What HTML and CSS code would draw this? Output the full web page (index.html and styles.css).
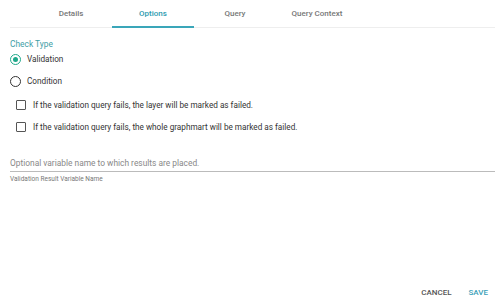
FILE: index.html
```html
<!DOCTYPE html>
<html lang="en">
<head>
    <meta charset="UTF-8" />
    <title>Check Options</title>
    <link rel="stylesheet" href="styles.css">
</head>
<body>
    <div class="dialog">
        <nav class="tabs">
            <div class="tab">Details</div>
            <div class="tab active">Options</div>
            <div class="tab">Query</div>
            <div class="tab">Query Context</div>
        </nav>

        <div class="content">
            <div class="group-label">Check Type</div>
            <div class="radio-row">
                <span class="radio checked"></span>
                <span>Validation</span>
            </div>
            <div class="radio-row">
                <span class="radio"></span>
                <span>Condition</span>
            </div>

            <div class="checks">
                <div class="check-row">
                    <span class="checkbox"></span>
                    <span>If the validation query fails, the layer will be marked as failed.</span>
                </div>
                <div class="check-row">
                    <span class="checkbox"></span>
                    <span>If the validation query fails, the whole graphmart will be marked as failed.</span>
                </div>
            </div>

            <div class="field">
                <div class="field-input">Optional variable name to which results are placed.</div>
                <div class="field-hint">Validation Result Variable Name</div>
            </div>
        </div>

        <footer class="actions">
            <div class="btn">CANCEL</div>
            <div class="btn primary">SAVE</div>
        </footer>
    </div>
</body>
</html>
```

FILE: styles.css
```css
body {
    margin: 0;
    background-color: #fff;
    font-family: Roboto, "Liberation Sans", sans-serif;
    color: #333;
}

.dialog {
    height: 300px;
    display: flex;
    flex-direction: column;
    box-sizing: border-box;
    padding: 0 5px 0 10px;
}

.tabs {
    display: flex;
    padding-left: 20px;
    border-bottom: 1px solid #eee;
}

.tab {
    width: 82px;
    text-align: center;
    font-size: 8px;
    font-weight: 500;
    color: #777;
    padding: 9px 0 8px;
    border-bottom: 2px solid transparent;
    margin-bottom: -1px;
}

.tab.active {
    color: #2e9bb0;
    border-bottom-color: #3aa6b9;
}

.content {
    flex: 1;
    padding-top: 11px;
}

.group-label {
    font-size: 8.4px;
    color: #3e9ea6;
    margin-bottom: -1px;
}

.radio-row {
    display: flex;
    align-items: center;
    gap: 6px;
    font-size: 8.2px;
    height: 22px;
}

.radio {
    width: 9px;
    height: 9px;
    border: 1.2px solid #333;
    border-radius: 50%;
    display: flex;
    justify-content: center;
    align-items: center;
}

.radio.checked {
    border-color: #1fa88a;
}

.radio.checked::after {
    content: "";
    width: 5px;
    height: 5px;
    border-radius: 50%;
    background-color: #1fa88a;
}

.checks {
    padding: 2px 0 0 6px;
}

.check-row {
    display: flex;
    align-items: center;
    gap: 7px;
    font-size: 8.2px;
    height: 22px;
}

.checkbox {
    width: 8px;
    height: 8px;
    border: 1.2px solid #555;
    border-radius: 1px;
}

.field {
    margin-top: 20px;
}

.field-input {
    font-size: 8.4px;
    color: #888;
    padding-bottom: 3px;
    border-bottom: 1px solid #bbb;
}

.field-hint {
    font-size: 6.5px;
    color: #777;
    margin-top: 3px;
}

.actions {
    display: flex;
    justify-content: flex-end;
    gap: 17px;
    padding: 0 7px 3px 0;
}

.btn {
    font-size: 8px;
    font-weight: 500;
    color: #555;
}

.btn.primary {
    color: #3aa0b8;
}
```
